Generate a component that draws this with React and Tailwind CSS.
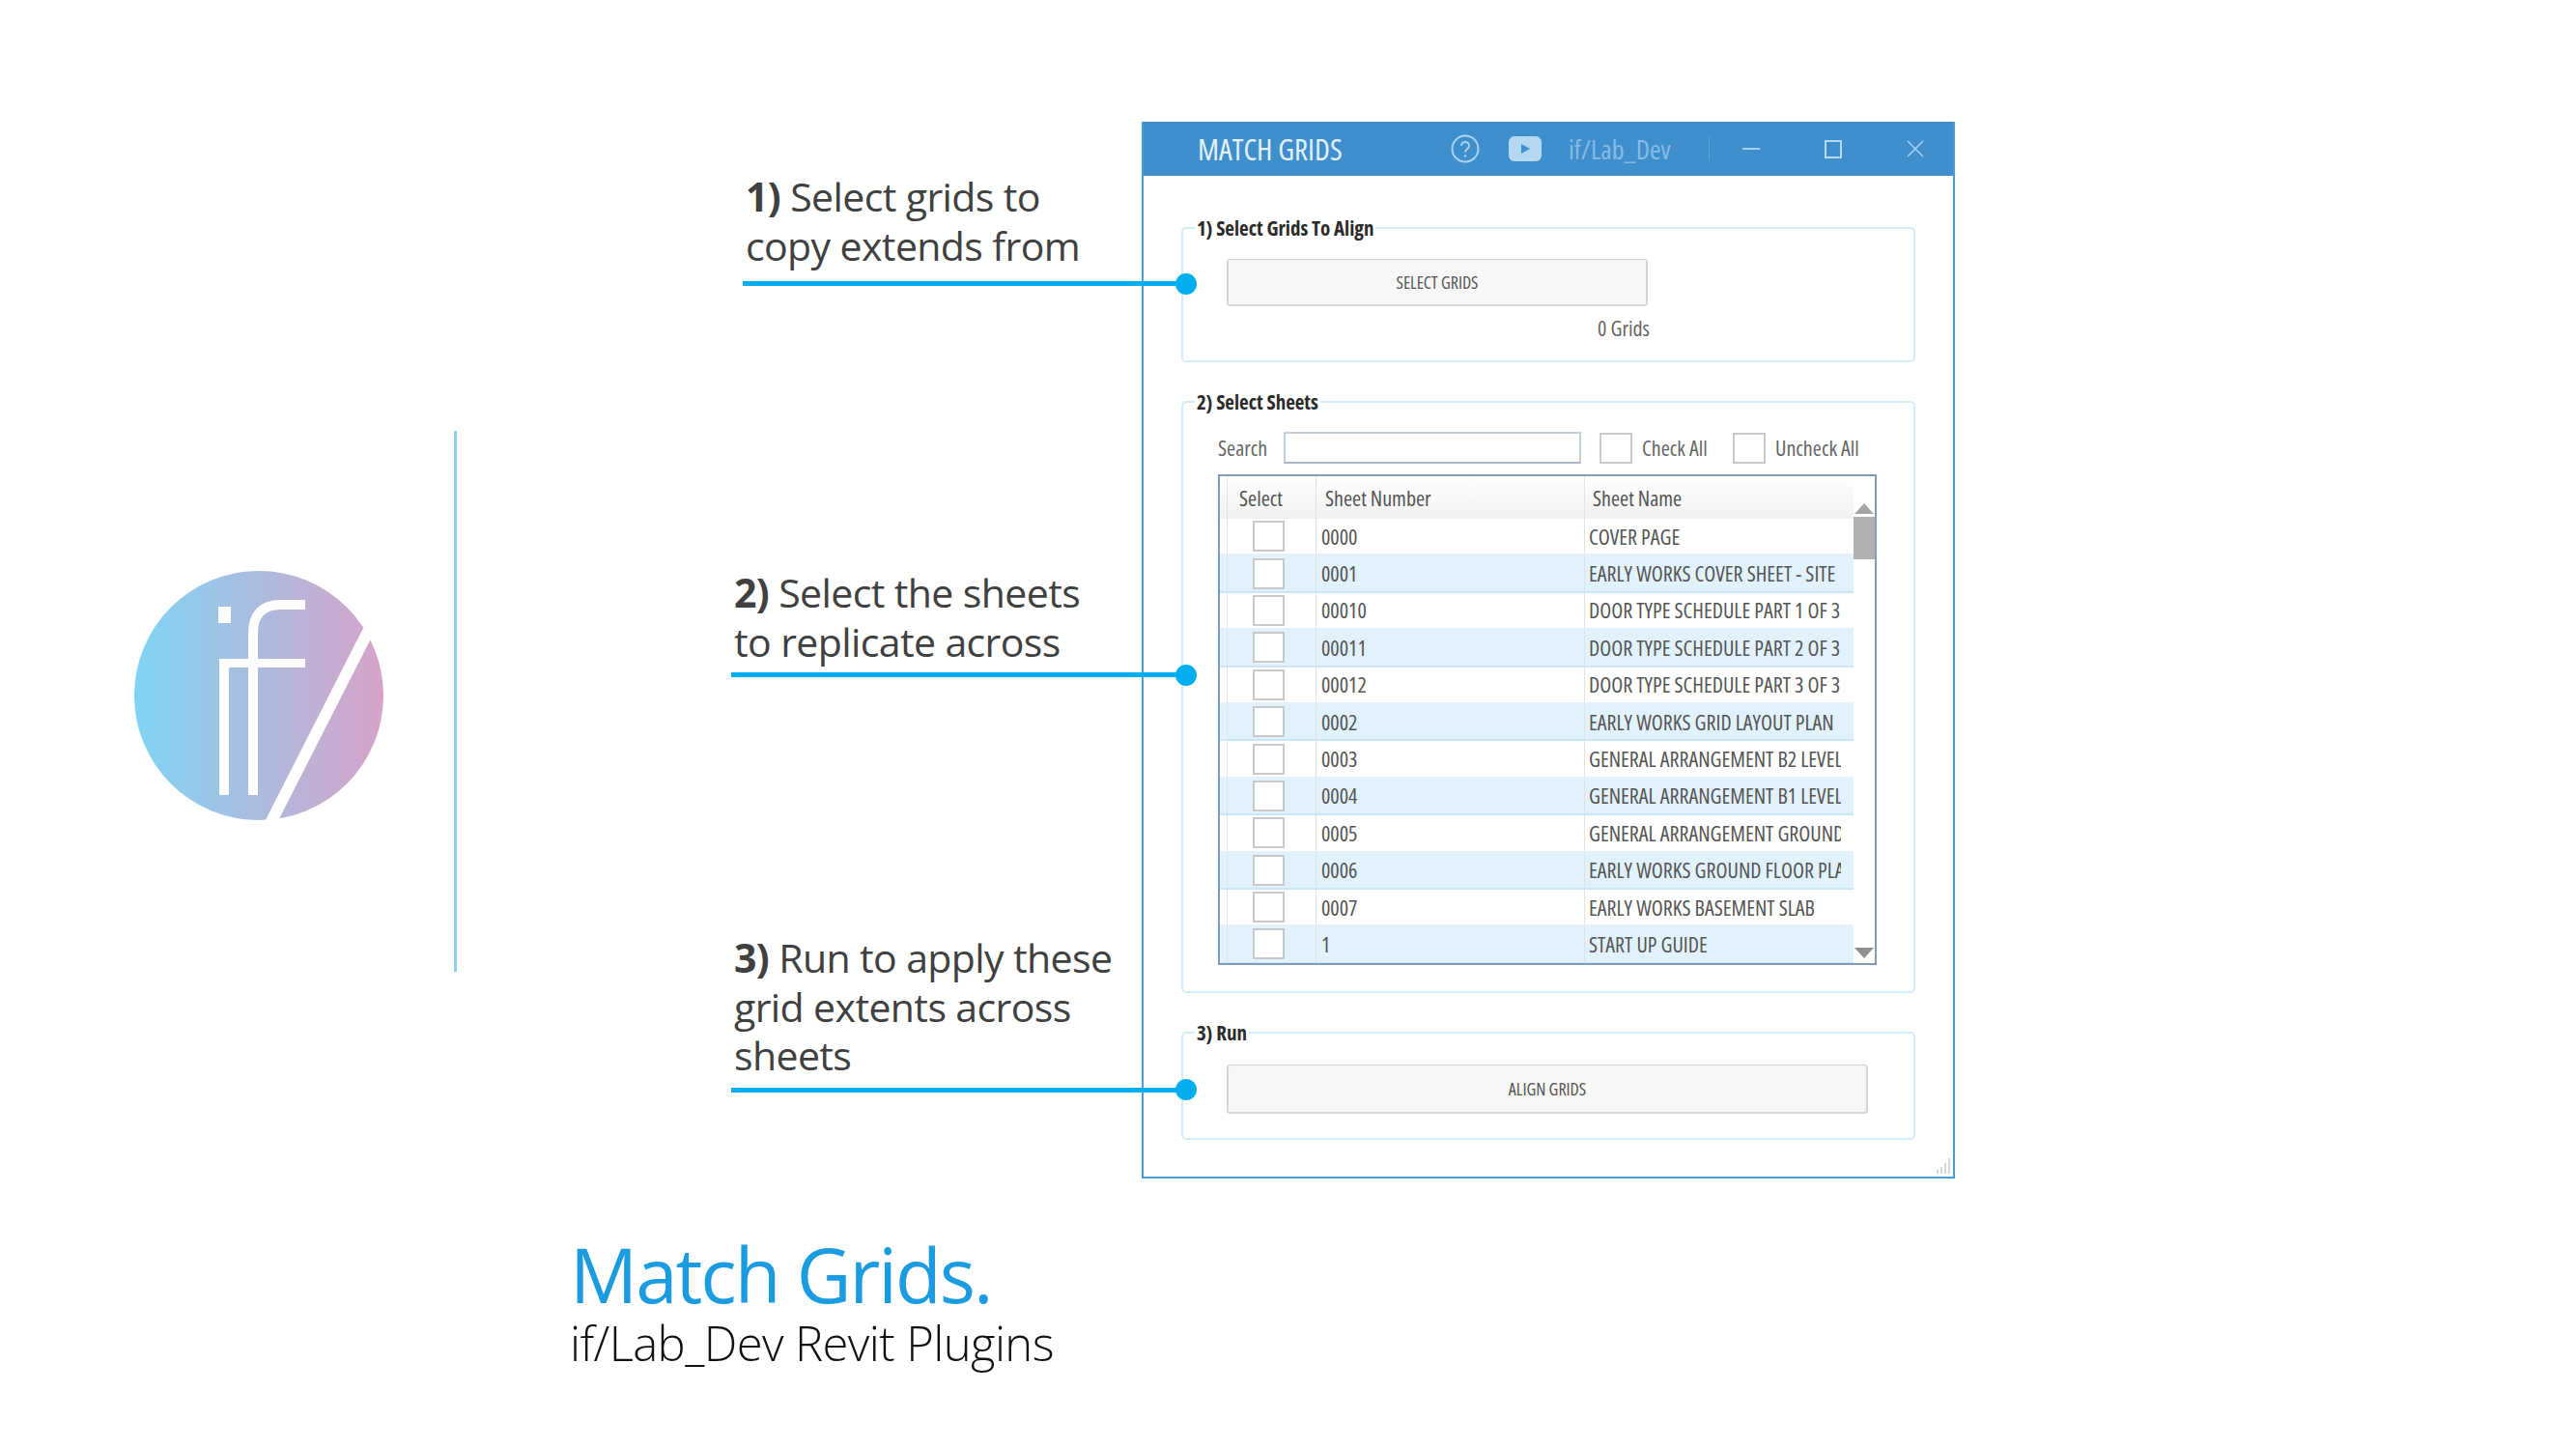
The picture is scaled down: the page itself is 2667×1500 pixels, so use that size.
const rows = [
  ["0000", "COVER PAGE"],
  ["0001", "EARLY WORKS COVER SHEET - SITE"],
  ["00010", "DOOR TYPE SCHEDULE PART 1 OF 3"],
  ["00011", "DOOR TYPE SCHEDULE PART 2 OF 3"],
  ["00012", "DOOR TYPE SCHEDULE PART 3 OF 3"],
  ["0002", "EARLY WORKS GRID LAYOUT PLAN"],
  ["0003", "GENERAL ARRANGEMENT B2 LEVEL"],
  ["0004", "GENERAL ARRANGEMENT B1 LEVEL"],
  ["0005", "GENERAL ARRANGEMENT GROUND"],
  ["0006", "EARLY WORKS GROUND FLOOR PLAN"],
  ["0007", "EARLY WORKS BASEMENT SLAB"],
  ["1", "START UP GUIDE"],
  ["", ""],
];

const ui = "font-['Open_Sans',sans-serif] [font-stretch:75%]";

function Logo() {
  return (
    <svg width="258" height="262" viewBox="139 590 258 262" className="shrink-0">
      <defs>
        <linearGradient id="lg" x1="0" x2="1" y1="0" y2="0">
          <stop offset="0" stopColor="#80d5f5" />
          <stop offset="1" stopColor="#d8a2c8" />
        </linearGradient>
      </defs>
      <circle cx="268" cy="720" r="129" fill="url(#lg)" />
      <rect x="226" y="628" width="13" height="17" fill="#fff" />
      <rect x="227" y="682" width="10" height="141" fill="#fff" />
      <rect x="227" y="682" width="89" height="9" fill="#fff" />
      <path d="M262 823V655C262 636 272 626 290 626H316" fill="none" stroke="#fff" strokeWidth="10" />
      <path d="M388 640L276 860" fill="none" stroke="#fff" strokeWidth="12" />
    </svg>
  );
}

function Note({ mt, ml, rule, children }) {
  return (
    <div className={mt}>
      <div className={`${ml} w-[420px] font-['Open_Sans',sans-serif] text-[41px] leading-[50.5px] tracking-[-0.6px] text-[#404040]`}>
        {children}
      </div>
      <div className={rule}>
        <span className="absolute -right-[11px] -top-[8.5px] h-[22px] w-[22px] rounded-full bg-[#00aeef]" />
      </div>
    </div>
  );
}

function Check({ size = "h-[32px] w-[33px]" }) {
  return <span className={`block shrink-0 ${size} border-2 border-[#c9c9c9] bg-white`} />;
}

function Group({ title, className, children }) {
  return (
    <fieldset className={`rounded-[5px] border-2 border-[#d5ecfa] ${className}`}>
      <legend className={`ml-[12px] px-[2px] ${ui} text-[21px] leading-[26px] font-bold text-[#2b2b2b]`}>{title}</legend>
      {children}
    </fieldset>
  );
}

function Button({ className, children }) {
  return (
    <div className={`flex items-center justify-center rounded-[3px] border-2 border-t border-[#d6d6d6] bg-[#f7f7f7] ${ui} text-[18px] text-[#555] ${className}`}>
      {children}
    </div>
  );
}

function SheetTable() {
  return (
    <div className={`mt-[11px] ml-[36px] flex h-[508px] w-[682px] overflow-hidden border-2 border-[#7f9db9] ${ui} text-[22px] text-[#555]`}>
      <div className="w-[656px] shrink-0">
        <div className="flex h-[44px] items-center bg-gradient-to-b from-white to-[#f1f1f1] pl-[7px]">
          <div className="w-[93px] border-x border-[#e2e2e2] pl-[12px] leading-[44px]">Select</div>
          <div className="w-[278px] border-r border-[#e2e2e2] pl-[9px] leading-[44px]">Sheet Number</div>
          <div className="pl-[8px]">Sheet Name</div>
        </div>
        {rows.map((r, i) => (
          <div
            key={i}
            className={`flex h-[38.4px] items-center border-b-2 pl-[7px] ${i % 2 ? "border-[#c9e7f9] bg-[#e2f2fc]" : "border-[#e4f2fb] bg-white"}`}
          >
            <div className="flex h-full w-[93px] shrink-0 items-center border-x border-[#e2e2e2] pl-[26px]">
              <Check />
            </div>
            <div className="flex h-full w-[278px] shrink-0 items-center border-r border-[#e2e2e2] pl-[5px]">{r[0]}</div>
            <div className="w-[265px] overflow-hidden pl-[4px] whitespace-nowrap">{r[1]}</div>
          </div>
        ))}
      </div>
      <div className="flex flex-1 flex-col items-center bg-white pt-[28px]">
        <span className="h-0 w-0 border-x-[10px] border-b-[11px] border-x-transparent border-b-[#a6a6a6]" />
        <span className="mt-[3px] h-[44px] w-[22px] bg-[#b0b0b0]" />
        <span className="mt-auto mb-[5px] h-0 w-0 border-x-[10px] border-t-[11px] border-x-transparent border-t-[#8f8f8f]" />
      </div>
    </div>
  );
}

function TitleBar() {
  return (
    <div className={`flex h-[56px] items-center bg-[#3f8fcd] pl-[56px] ${ui}`}>
      <span className="w-[262px] text-[31px] text-[#e4f1fb]">MATCH GRIDS</span>
      <svg width="30" height="30" viewBox="0 0 30 30" className="shrink-0 text-[#a9d2f0]" fill="none" stroke="currentColor">
        <circle cx="15" cy="15" r="13.5" strokeWidth="2" />
        <path d="M11 12c0-2.500 2-4 4-4s4 1.500 4 4c0 3-4 3.500-4 6.500" strokeWidth="2" />
        <circle cx="15" cy="22.500" r="1.300" fill="currentColor" stroke="none" />
      </svg>
      <svg width="34" height="26" viewBox="0 0 34 26" className="ml-[30px] shrink-0">
        <rect width="34" height="26" rx="6" fill="#b5d8f2" />
        <path d="M13 8l9 5-9 5z" fill="#3f8fcd" />
      </svg>
      <span className="ml-[28px] w-[145px] text-[28px] text-[#86bce6]">if/Lab_Dev</span>
      <span className="h-[24px] w-px bg-[#5ea3d9]" />
      <span className="ml-[34px] h-[2px] w-[18px] bg-[#a9d2f0]" />
      <span className="ml-[67px] h-[19px] w-[18px] border-2 border-[#b5d8f2]" />
      <svg width="20" height="20" viewBox="0 0 20 20" className="ml-[66px] shrink-0" stroke="#a9d2f0" strokeWidth="1.600">
        <path d="M2 2l16 16M18 2L2 18" />
      </svg>
    </div>
  );
}

function Window() {
  return (
    <div className="relative h-[1094px] w-[842px] shrink-0 border-2 border-t-0 border-[#4a9bd9] bg-white">
      <TitleBar />
      <div className="flex flex-col px-[39px] pt-[41px]">
        <Group title="1) Select Grids To Align" className="h-[152px]">
          <Button className="mt-[19px] ml-[45px] h-[49px] w-[436px]">SELECT GRIDS</Button>
          <div className={`mt-[6px] w-[483px] text-right ${ui} text-[22px] text-[#666]`}>0 Grids</div>
        </Group>
        <Group title="2) Select Sheets" className="mt-[28px] h-[625px]">
          <div className={`mt-[18px] ml-[36px] flex items-center ${ui} text-[22px] text-[#666]`}>
            <span className="w-[68px]">Search</span>
            <span className="h-[33px] w-[308px] border-2 border-[#c4cfdc] border-b-[#aab7c6] bg-white" />
            <span className="ml-[19px]"><Check size="h-[32px] w-[34px]" /></span>
            <span className="ml-[10px] w-[94px]">Check All</span>
            <Check size="h-[32px] w-[34px]" />
            <span className="ml-[10px]">Uncheck All</span>
          </div>
          <SheetTable />
        </Group>
        <Group title="3) Run" className="mt-[28px] h-[124px]">
          <Button className="mt-[20px] ml-[45px] h-[51px] w-[664px]">ALIGN GRIDS</Button>
        </Group>
      </div>
      <svg width="20" height="20" viewBox="0 0 20 20" className="absolute right-[1px] bottom-[1px]" fill="#cfdbe4">
        <rect x="16" y="2" width="2" height="16" />
        <rect x="12" y="7" width="2" height="11" />
        <rect x="8" y="11" width="2" height="7" />
        <rect x="4" y="14" width="2" height="4" />
      </svg>
    </div>
  );
}

export default function App() {
  return (
    <div className="h-[1500px] w-[2667px] overflow-hidden bg-white">
      <div className="flex pt-[126px]">
        <div className="flex w-[757px] shrink-0 pl-[139px]">
          <div className="mt-[464px]"><Logo /></div>
          <div className="mt-[320px] ml-[73px] h-[560px] w-[3px] bg-[#8fd0ef]" />
        </div>
        <div className="relative z-10 w-[425px] shrink-0">
          <Note mt="mt-[52px]" ml="ml-[15px]" rule="relative mt-[12px] ml-[12px] h-[5px] w-[459px] bg-[#00aeef]">
            <b>1)</b> Select grids to<br />copy extends from
          </Note>
          <Note mt="mt-[292px]" ml="ml-[3px]" rule="relative mt-[7px] h-[5px] w-[471px] bg-[#00aeef]">
            <b>2)</b> Select the sheets<br />to replicate across
          </Note>
          <Note mt="mt-[265px]" ml="ml-[3px]" rule="relative mt-[8px] h-[5px] w-[471px] bg-[#00aeef]">
            <b>3)</b> Run to apply these<br />grid extents across<br />sheets
          </Note>
        </div>
        <Window />
      </div>
      <div className="mt-[53px] ml-[590px] font-['Open_Sans',sans-serif]">
        <div className="text-[78px] leading-[92px] tracking-[-2px] text-[#1c9ce0]">Match Grids.</div>
        <div className="-mt-[5px] text-[49px] leading-[60px] font-light tracking-[-0.6px] text-[#111]">if/Lab_Dev Revit Plugins</div>
      </div>
    </div>
  );
}
